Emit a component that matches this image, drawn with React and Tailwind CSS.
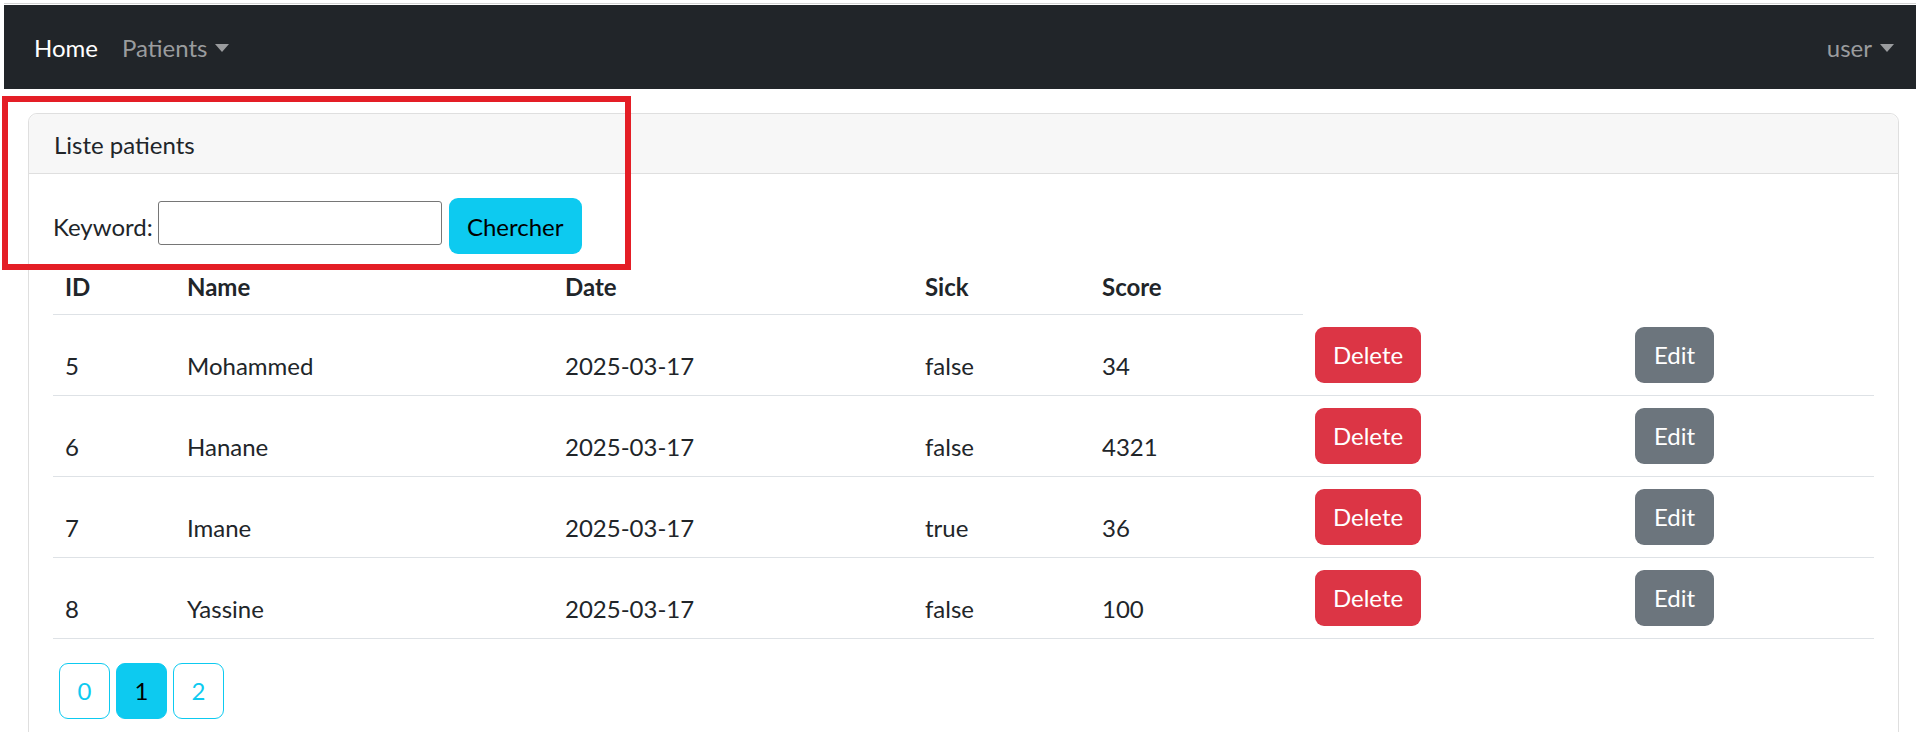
const patients = [
  { id: 5, name: 'Mohammed', date: '2025-03-17', sick: 'false', score: 34 },
  { id: 6, name: 'Hanane', date: '2025-03-17', sick: 'false', score: 4321 },
  { id: 7, name: 'Imane', date: '2025-03-17', sick: 'true', score: 36 },
  { id: 8, name: 'Yassine', date: '2025-03-17', sick: 'false', score: 100 },
];

const Caret = () => (
  <span className="inline-block w-0 h-0 ml-[8px] border-l-[7px] border-r-[7px] border-t-[8px] border-l-transparent border-r-transparent border-t-current align-middle" />
);

const Navbar = () => {
  return (
    <div className="pt-[3px]">
      <div className="ml-[4px] h-px bg-[#d4d4d4]" />
      <div className="ml-[4px] mt-px h-[84px] bg-[#212529] flex items-center pt-[1px] pl-[30px] pr-[22px] text-[24px]">
        <span className="text-white">Home</span>
        <span className="ml-[24px] text-[#9a9c9e] flex items-center">
          Patients
          <Caret />
        </span>
        <span className="ml-auto text-[#9a9c9e] flex items-center">
          user
          <Caret />
        </span>
      </div>
    </div>
  );
};

const PatientTable = () => {
  const th = 'px-3 pt-[15px] pb-[9px] text-left font-bold border-b border-[#dee2e6] align-bottom leading-[36px]';
  const td = 'px-3 pt-[13px] pb-[11px] border-b border-[#dee2e6] align-bottom leading-[36px]';
  const tdBtn = 'px-3 pt-[12px] pb-[12px] border-b border-[#dee2e6] align-top';
  return (
    <table className="w-full border-collapse">
      <thead>
        <tr>
          <th className={`${th} w-[122px]`}>ID</th>
          <th className={`${th} w-[378px]`}>Name</th>
          <th className={`${th} w-[360px]`}>Date</th>
          <th className={`${th} w-[177px]`}>Sick</th>
          <th className={`${th} w-[213px]`}>Score</th>
        </tr>
      </thead>
      <tbody>
        {patients.map((p) => (
          <tr key={p.id}>
            <td className={td}>{p.id}</td>
            <td className={td}>{p.name}</td>
            <td className={td}>{p.date}</td>
            <td className={td}>{p.sick}</td>
            <td className={td}>{p.score}</td>
            <td className={`${tdBtn} w-[320px]`}>
              <button className="w-[106px] h-[56px] rounded-[9px] bg-[#dc3545] text-white">Delete</button>
            </td>
            <td className={tdBtn}>
              <button className="w-[79px] h-[56px] rounded-[9px] bg-[#6c757d] text-white">Edit</button>
            </td>
          </tr>
        ))}
      </tbody>
    </table>
  );
};

export default function App() {
  return (
    <div className="relative min-h-[732px] bg-white text-[24px] text-[#212529] font-['Lato','Liberation_Sans',sans-serif] overflow-hidden">
      <Navbar />

      <div className="ml-[28px] mr-[17px] mt-[24px] border border-[#dfdfdf] rounded-[9px]">
        <div className="h-[60px] px-[25px] pt-[2px] flex items-center bg-[#f7f7f7] border-b border-[#dfdfdf] rounded-t-[9px]">
          Liste patients
        </div>
        <div className="px-[24px] pt-[24px] pb-[24px]">
          <form className="flex items-center" onSubmit={(e) => e.preventDefault()}>
            <label className="pt-[2px]">Keyword:</label>
            <input className="ml-[5px] w-[284px] h-[44px] border border-[#767676] rounded-[3px] self-start mt-[3px] px-1 text-[20px]" />
            <button className="ml-[7px] w-[133px] h-[56px] pt-[2px] rounded-[9px] bg-[#0dcaf0] text-black">Chercher</button>
          </form>

          <PatientTable />

          <div className="mt-[24px] flex">
            {[0, 1, 2].map((n) => (
              <button
                key={n}
                className={
                  n === 1
                    ? 'ml-[6px] w-[51px] h-[56px] rounded-[9px] bg-[#0dcaf0] border-[1.5px] border-[#0dcaf0] text-black'
                    : 'ml-[6px] w-[51px] h-[56px] rounded-[9px] bg-white border-[1.5px] border-[#0dcaf0] text-[#0dcaf0]'
                }
              >
                {n}
              </button>
            ))}
          </div>
        </div>
      </div>

      <div className="absolute left-[2px] top-[96px] w-[629px] h-[174px] border-[6px] border-[#e41e26] pointer-events-none" />
    </div>
  );
}
